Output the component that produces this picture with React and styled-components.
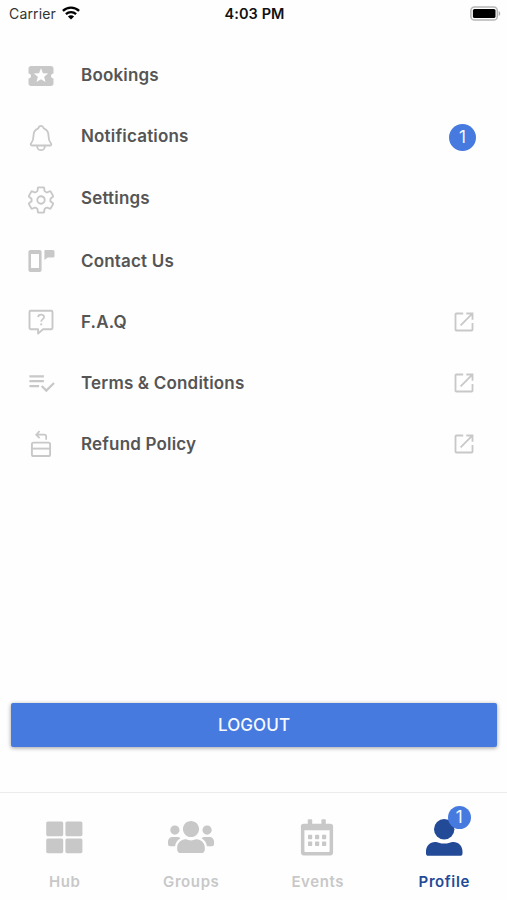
import React from 'react';
import styled, { createGlobalStyle } from 'styled-components';
import { MdLocalPlay } from 'react-icons/md';
import { IoNotificationsOutline, IoSettingsOutline } from 'react-icons/io5';
import { FaUsers } from 'react-icons/fa';

const GlobalStyle = createGlobalStyle`
    body{
        margin: 0;
        background-color: #fefefe;
        font-family: Inter, "Liberation Sans", sans-serif;
    }
`

const Screen = styled.div`
    display: flex;
    flex-direction: column;
    width: 100%;
    height: 900px;
    overflow: hidden;
`

//Status bar
const StatusBar = styled.div`
    display: grid;
    grid-template-columns: 1fr auto 1fr;
    align-items: center;
    box-sizing: border-box;
    height: 28px;
    padding: 0 6px 0 8px;
    color: #111;
    font-size: 14px;
    line-height: 28px;
    .carrier{
        display: flex;
        align-items: center;
        gap: 6px;
        padding-left: 1px;
        color: #333;
        letter-spacing: .15px;
    }
    .time{
        font-size: 14.5px;
        font-weight: 600;
        letter-spacing: .1px;
    }
    .battery{
        justify-self: end;
        margin-bottom: 2px;
    }
    svg{
        display: block;
    }
    .carrier svg{
        margin-bottom: 2px;
    }
`

//Menu
const Menu = styled.div`
    display: flex;
    flex-direction: column;
    flex: 1;
    padding: 17px 31px 0 27px;
`

const MenuRow = styled.div`
    display: flex;
    align-items: center;
    height: ${props => props.$height}px;
`

const MenuIcon = styled.div`
    display: flex;
    align-items: center;
    justify-content: center;
    width: 28px;
    height: 28px;
    padding-top: ${props => props.$drop || 0}px;
    margin-right: 26px;
    color: #c8c8c8;
    svg{
        flex: none;
    }
    &.thin path{
        stroke-width: 31px;
    }
`

const MenuLabel = styled.div`
    flex: 1;
    color: #555;
    font-size: 17px;
    font-weight: 600;
    line-height: 20px;
    letter-spacing: .18px;
`

const Badge = styled.span`
    display: flex;
    align-items: center;
    justify-content: center;
    width: ${props => props.$size}px;
    height: ${props => props.$size}px;
    border-radius: 50%;
    background-color: #467adf;
    color: #f4f7ff;
    font-size: 17px;
    line-height: 1;
`

const RowBadge = styled(Badge)`
    margin-top: 3px;
`

const RowLink = styled.div`
    display: flex;
    padding-right: 2px;
    svg{
        display: block;
    }
`

//Logout
const LogoutButton = styled.button`
    height: 44px;
    margin: 0 10px 45px 11px;
    padding: 0;
    border: none;
    border-radius: 2px;
    background-color: #477adf;
    box-shadow: 0 1px 4px rgba(0, 0, 0, .38);
    color: #f6f9ff;
    font-family: inherit;
    font-size: 17px;
    font-weight: 500;
    letter-spacing: .1px;
`

//Bottom tabs
const TabBar = styled.div`
    display: grid;
    grid-template-columns: repeat(4, 1fr);
    box-sizing: border-box;
    height: 108px;
    padding-left: 1px;
    border-top: 1px solid #ececec;
`

const Tab = styled.div`
    display: flex;
    flex-direction: column;
    align-items: center;
    padding-top: 24px;
    color: ${props => props.$active ? "#234a97" : "#c8c8c8"};
    .tab-icon{
        position: relative;
        display: flex;
        align-items: center;
        justify-content: center;
        width: 48px;
        height: 40px;
    }
    .tab-label{
        margin-top: 14px;
        padding: 1px 0 0 1px;
        font-size: 15px;
        font-weight: 600;
        line-height: 20px;
        letter-spacing: .6px;
    }
`

const TabBadge = styled(Badge)`
    position: absolute;
    top: -11px;
    left: 28px;
`

const WifiIcon = () => (
    <svg width="18" height="14" viewBox="0 0 18 14" fill="none" stroke="#000" strokeWidth="2.3">
        <path d="M.9 4.9C5.4.4 12.6.4 17.1 4.9" />
        <path d="M3.9 8.1c2.9-2.7 7.3-2.7 10.2 0" />
        <path d="M9 13.6 5.9 10.4c1.8-1.5 4.4-1.5 6.2 0z" fill="#000" stroke="none" />
    </svg>
)

const BatteryIcon = () => (
    <svg width="31" height="15" viewBox="0 0 31 15">
        <rect x=".9" y=".9" width="26.4" height="13.2" rx="3.6" fill="#fff" stroke="#b5b5b5" strokeWidth="1.5" />
        <rect x="2.9" y="2.9" width="22.6" height="9.2" rx="1.6" fill="#000" />
        <path d="M28.7 5.2c2 .7 2 4 0 4.7z" fill="#aaa" />
    </svg>
)

const PhoneMessageIcon = () => (
    <svg width="28" height="28" viewBox="0 0 28 28" fill="currentColor">
        <path fillRule="evenodd" d="M3.4 3h9.2a2 2 0 0 1 2 2v18a2 2 0 0 1-2 2H3.4a2 2 0 0 1-2-2V5a2 2 0 0 1 2-2zM4 7v14h8V7z" />
        <path d="M18.6 3H26a1.5 1.5 0 0 1 1.5 1.5v4.4a1.5 1.5 0 0 1-1.5 1.5h-5.2L17.4 13V4.2c0-.7.5-1.2 1.2-1.2z" />
    </svg>
)

const QuestionIcon = () => (
    <svg width="28" height="28" viewBox="0 0 28 28" fill="none" stroke="currentColor" strokeWidth="1.9" strokeLinejoin="round">
        <path d="M3.6 2.8h20.8c.6 0 1.1.5 1.1 1.1v16.2c0 .6-.5 1.1-1.1 1.1H16l-4.9 4.4v-4.4H3.6c-.6 0-1.1-.5-1.1-1.1V3.9c0-.6.5-1.1 1.1-1.1z" />
        <path d="M11.1 9.1c.2-3.2 6-3.2 6 0 0 2.2-2.9 2-2.9 4.7" strokeWidth="1.7" />
        <path d="M14.2 15.4v1.9" />
    </svg>
)

const TermsIcon = () => (
    <svg width="29" height="29" viewBox="0 0 24 24" fill="currentColor">
        <path d="M14 10H2v1.800h12V10zm0-4H2v1.800h12V6zM2 15.900h8V14.100H2v1.800zM21.700 11.700 23 13l-6.990 7-4.510-4.500 1.300-1.300 3.210 3.200 5.690-5.700z" />
    </svg>
)

const RefundIcon = () => (
    <svg width="28" height="28" viewBox="0 0 28 28" fill="none" stroke="currentColor" strokeWidth="1.9">
        <rect x="4.900" y="12.600" width="18.200" height="13.400" rx="1.600" />
        <path d="M4.900 18.600h18.200" />
        <path d="M12.600 1.200 9.200 4.700l3.400 3.500M9.400 4.700h7.800c1.400 0 2 .7 2 2v3" strokeWidth="1.700" />
    </svg>
)

const ExternalIcon = () => (
    <svg width="20" height="20" viewBox="0 0 20 20" fill="none" stroke="#c8c8c8" strokeWidth="1.8">
        <path d="M9.200 1.500H2.300c-.5 0-.8.3-.8.8v15.400c0 .5.3.8.8.8h15.400c.5 0 .8-.3.8-.8V11" />
        <path d="M12.300 1.500h6.200v6.200M18.300 1.700 6.600 13.400" />
    </svg>
)

const HubIcon = () => (
    <svg width="48" height="40" viewBox="0 0 48 40" fill="currentColor">
        <rect x="6.2" y="4.4" width="17" height="14.8" rx="1.6" />
        <rect x="25.4" y="4.4" width="17" height="14.8" rx="1.6" />
        <rect x="6.2" y="21.4" width="17" height="14.8" rx="1.6" />
        <rect x="25.4" y="21.4" width="17" height="14.8" rx="1.6" />
    </svg>
)

const CalendarIcon = () => (
    <svg width="48" height="40" viewBox="0 0 48 40" fill="currentColor">
        <path fillRule="evenodd" d="M10.7 6.8h26.6a2.8 2.8 0 0 1 2.8 2.8v26a2.8 2.8 0 0 1-2.8 2.8H10.7a2.8 2.8 0 0 1-2.8-2.8v-26a2.8 2.8 0 0 1 2.8-2.8zM11.4 13.2v20.9c0 .6.3.9.9.9h23.4c.6 0 .9-.3.9-.9V13.2z" />
        <rect x="14.8" y="2.2" width="4.4" height="6" rx="1" />
        <rect x="28.4" y="2.2" width="4.4" height="6" rx="1" />
        {[17.8, 24.6].map(y =>
            [15, 22, 29].map(x => <rect key={x + "-" + y} x={x} y={y} width="4.2" height="4.4" rx=".7" />)
        )}
    </svg>
)

const ProfileIcon = () => (
    <svg width="48" height="40" viewBox="0 0 48 40" fill="currentColor">
        <circle cx="24.2" cy="12.2" r="10.2" />
        <path d="M15 24.9c1.8 0 2.5.3 3.9.8 3.4 1.2 7.2 1.2 10.6 0 1.4-.5 2.1-.8 3.9-.8 5.2 0 9.1 4.100 9.100 9.400v2.100c0 1.400-1 2.300-2.300 2.300H8.300C7 38.700 6 37.800 6 36.400v-2.100c0-5.300 3.900-9.400 9-9.400z" />
    </svg>
)

const menuItems = [
    { label: "Bookings", height: 60, icon: <MdLocalPlay size={30} />, drop: 2 },
    { label: "Notifications", height: 62, icon: <IoNotificationsOutline size={30} />, drop: 4, thin: true, badge: 1 },
    { label: "Settings", height: 62, icon: <IoSettingsOutline size={30} />, drop: 4, thin: true },
    { label: "Contact Us", height: 63, icon: <PhoneMessageIcon />, drop: 1 },
    { label: "F.A.Q", height: 60, icon: <QuestionIcon />, link: true },
    { label: "Terms & Conditions", height: 61, icon: <TermsIcon />, link: true },
    { label: "Refund Policy", height: 61, icon: <RefundIcon />, drop: 1, link: true },
]

const tabs = [
    { label: "Hub", icon: <HubIcon /> },
    { label: "Groups", icon: <FaUsers size={46} /> },
    { label: "Events", icon: <CalendarIcon /> },
    { label: "Profile", icon: <ProfileIcon />, active: true, badge: 1 },
]

const App = () => {
    return (
        <Screen>
            <GlobalStyle />
            <StatusBar>
                <div className="carrier">
                    Carrier
                    <WifiIcon />
                </div>
                <div className="time">4:03 PM</div>
                <div className="battery">
                    <BatteryIcon />
                </div>
            </StatusBar>
            <Menu>
                {menuItems.map(item => (
                    <MenuRow key={item.label} $height={item.height}>
                        <MenuIcon $drop={item.drop} className={item.thin ? "thin" : undefined}>
                            {item.icon}
                        </MenuIcon>
                        <MenuLabel>{item.label}</MenuLabel>
                        {item.badge && <RowBadge $size={27}>{item.badge}</RowBadge>}
                        {item.link && <RowLink><ExternalIcon /></RowLink>}
                    </MenuRow>
                ))}
            </Menu>
            <LogoutButton>LOGOUT</LogoutButton>
            <TabBar>
                {tabs.map(tab => (
                    <Tab key={tab.label} $active={tab.active}>
                        <div className="tab-icon">
                            {tab.icon}
                            {tab.badge && <TabBadge $size={23}>{tab.badge}</TabBadge>}
                        </div>
                        <div className="tab-label">{tab.label}</div>
                    </Tab>
                ))}
            </TabBar>
        </Screen>
    )
};

export default App;
